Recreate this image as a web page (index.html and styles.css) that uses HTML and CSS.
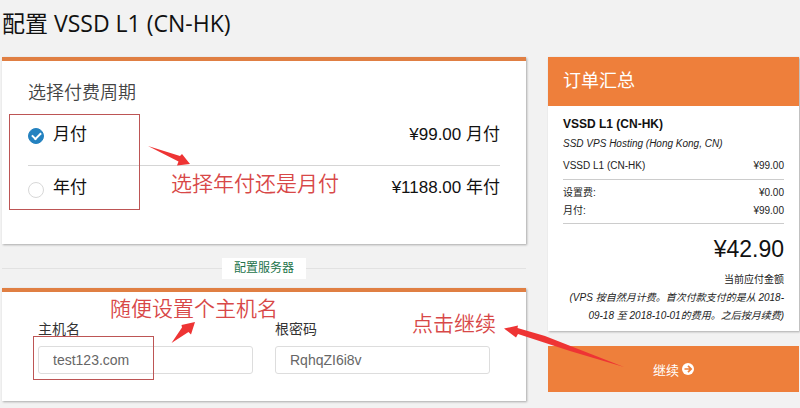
FILE: index.html
```html
<!DOCTYPE html>
<html lang="zh-CN">
<head>
<meta charset="utf-8">
<meta name="viewport" content="width=device-width, initial-scale=1">
<title>配置 VSSD L1 (CN-HK)</title>
<link rel="stylesheet" href="styles.css">
</head>
<body>
<div class="page">
  <h1 class="page-title">配置 VSSD L1 (CN-HK)</h1>
  <form class="columns">
    <main class="config">
      <section class="card billing">
        <h2 class="card-title">选择付费周期</h2>
        <label class="option">
          <input class="radio" type="radio" name="cycle" checked>
          <span>月付</span>
          <span class="price">¥99.00 月付</span>
        </label>
        <label class="option">
          <input class="radio" type="radio" name="cycle">
          <span>年付</span>
          <span class="price">¥1188.00 年付</span>
        </label>
      </section>
      <div class="divider"><span class="divider-label">配置服务器</span></div>
      <section class="card server">
        <div class="field">
          <label for="hostname">主机名</label>
          <input id="hostname" type="text" value="test123.com">
        </div>
        <div class="field">
          <label for="rootpw">根密码</label>
          <input id="rootpw" type="text" value="RqhqZI6i8v">
        </div>
      </section>
    </main>
    <aside class="sidebar">
      <section class="summary">
        <h2 class="summary-title">订单汇总</h2>
        <div class="summary-body">
          <strong class="product">VSSD L1 (CN-HK)</strong>
          <em class="group">SSD VPS Hosting (Hong Kong, CN)</em>
          <div class="line"><span>VSSD L1 (CN-HK)</span><span>¥99.00</span></div>
          <div class="fees">
            <div class="line"><span>设置费:</span><span>¥0.00</span></div>
            <div class="line"><span>月付:</span><span>¥99.00</span></div>
          </div>
          <div class="total">
            <span class="amount">¥42.90</span>
            <span>当前应付金额</span>
            <em>(VPS 按自然月计费。首次付款支付的是从 2018-<br>09-18 至 2018-10-01的费用。之后按月续费)</em>
          </div>
        </div>
      </section>
      <button class="continue" type="submit">
        继续
        <svg class="continue-icon" viewBox="0 0 12 12" aria-hidden="true">
          <circle cx="6" cy="6" r="6" fill="#fff"/>
          <path d="M2.5 6H9M6 2.8L9.2 6L6 9.2" fill="none" stroke="#ee7f3b" stroke-width="1.7"/>
        </svg>
      </button>
    </aside>
  </form>

  <!-- Tutorial annotations drawn over the form -->
  <div class="frame frame-cycle"></div>
  <div class="frame frame-host"></div>
  <span class="note note-cycle">选择年付还是月付</span>
  <span class="note note-host">随便设置个主机名</span>
  <span class="note note-continue">点击继续</span>
  <svg class="arrows" width="800" height="408" viewBox="0 0 800 408" aria-hidden="true">
    <path d="M148 146L180 156L182 154L190 164L177 165.500L178.500 161.500Z"/>
    <path d="M171.500 343L182 327.500L181.500 325L195 322L191 334.500L188.500 332Z"/>
    <path d="M624 367L570 351L518 334L516 337.500L504 328.500L518 325.500L517.500 328L545 336Z"/>
  </svg>
</div>
</body>
</html>
```
FILE: styles.css
```css
* { box-sizing: border-box; }

body {
  margin: 0;
  background: #f2f2f2;
  color: #222;
  font-family: "Liberation Sans", "Noto Sans CJK SC", sans-serif;
}

.page {
  position: relative;
  padding: 7px 1px 6px 2px;
}

.page-title {
  margin: 0 0 18px;
  color: #111;
  font: 400 23px/32px "Open Sans", "Noto Sans CJK SC", sans-serif;
}

h2 { margin: 0; font-weight: 400; }

.columns {
  display: grid;
  grid-template-columns: 524fr 251fr;
  gap: 22px;
  align-items: start;
}

.card {
  background: #fff;
  border-top: 4px solid #e07f43;
  box-shadow: 1px 1px 2px #aaa;
}

.billing { padding: 15px 26px 27px; }

.card-title {
  margin-bottom: 5px;
  color: #444;
  font-family: "Noto Sans CJK SC", sans-serif;
  font-size: 18px;
  font-weight: 350;
  line-height: 30px;
}

.option {
  display: flex;
  align-items: center;
  gap: 9px;
  height: 54px;
  padding-bottom: 4px;
  color: #111;
  font-size: 17px;
  line-height: 20px;
}

.option span { padding-bottom: 3px; }

.option + .option { border-top: 1px solid #d5d5d5; height: 52px; }

.price { margin-left: auto; }

.radio {
  display: grid;
  place-items: center;
  appearance: none;
  width: 16px;
  height: 16px;
  margin: 0;
  border: 1px solid #d8d8d8;
  border-radius: 50%;
  background: #fff;
}

.radio:checked { background: #2482c0; border-color: #2482c0; }

.radio:checked::after {
  content: "";
  width: 7px;
  height: 4px;
  border: solid #fff;
  border-width: 0 0 2px 2px;
  transform: translateY(-1px) rotate(-45deg);
}

.divider {
  display: flex;
  align-items: center;
  margin: 14px 0 9px;
}

.divider::before,
.divider::after {
  content: "";
  flex: 1;
  border-top: 1px solid #e2e2e2;
}

.divider-label {
  padding: 0 12px;
  background: #fff;
  color: #24734a;
  font-size: 12px;
  line-height: 21px;
}

.server {
  display: grid;
  grid-template-columns: 1fr 1fr;
  gap: 22px;
  padding: 27px 36px 27px;
}

.field {
  display: grid;
  gap: 7px;
  color: #333;
  font-size: 14px;
  line-height: 20px;
}

.field input {
  width: 100%;
  height: 28px;
  padding: 0 14px;
  border: 1px solid #ddd;
  border-radius: 3px;
  background: #fff;
  color: #666;
  font: inherit;
}

.sidebar { display: grid; gap: 15px; }

.summary {
  background: #fff;
  box-shadow: 1px 1px 2px #aaa;
}

.summary-title {
  padding: 0 15px;
  background: #ee7f3b;
  color: #fff;
  font-size: 18px;
  line-height: 49px;
}

.summary-body {
  padding: 8px 15px 6px;
  font-size: 10px;
  line-height: 18px;
}

.product,
.group { display: block; }

.product { color: #111; font-size: 12px; line-height: 20px; }
.group { margin-bottom: 3px; line-height: 20px; }

.line { display: flex; justify-content: space-between; }

.fees {
  margin: 4px 0 6px;
  padding: 4px 0 3px;
  border: solid #ccc;
  border-width: 1px 0;
}

.total {
  display: flex;
  flex-direction: column;
  text-align: right;
}

.amount {
  margin-bottom: 3px;
  color: #111;
  font-size: 23px;
  line-height: 38px;
}

.continue {
  display: flex;
  align-items: center;
  justify-content: center;
  gap: 3px;
  height: 46px;
  padding: 0;
  border: 0;
  background: #ee7f3b;
  color: #fff;
  font: 400 13px "Liberation Sans", "Noto Sans CJK SC", sans-serif;
}

.continue-icon { width: 12px; height: 12px; }

.frame {
  position: absolute;
  border: 1px solid #bd5555;
  pointer-events: none;
}

.frame-cycle { left: 9px; top: 114px; width: 131px; height: 96px; }
.frame-host { left: 33px; top: 336px; width: 121px; height: 44px; }

.note {
  position: absolute;
  color: #d84848;
  font-family: "Noto Sans CJK SC", sans-serif;
  font-size: 21px;
  font-weight: 350;
  line-height: 30px;
  white-space: nowrap;
  pointer-events: none;
}

.note-cycle { left: 171px; top: 167px; }
.note-host { left: 110px; top: 292px; }
.note-continue { left: 412px; top: 307px; }

.arrows {
  position: absolute;
  left: 0;
  top: 0;
  fill: #ee3434;
  pointer-events: none;
}
```
